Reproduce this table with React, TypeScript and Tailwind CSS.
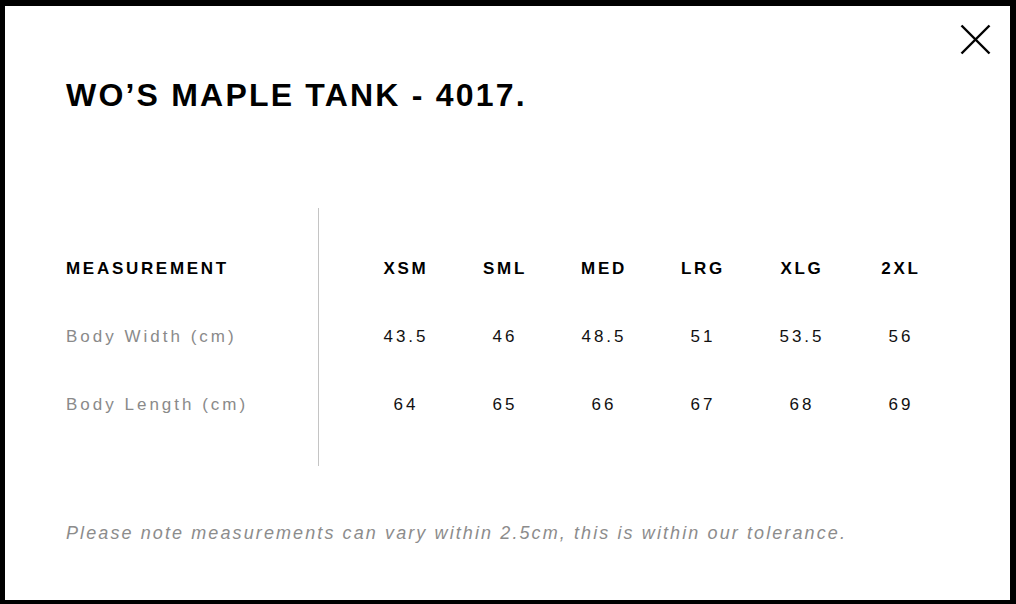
import React from "react";

const sizes = ["XSM", "SML", "MED", "LRG", "XLG", "2XL"];

const rows = [
  { label: "Body Width (cm)", values: ["43.5", "46", "48.5", "51", "53.5", "56"] },
  { label: "Body Length (cm)", values: ["64", "65", "66", "67", "68", "69"] },
];

function CloseIcon() {
  return (
    <svg width="31" height="31" viewBox="0 0 31 31" fill="none" stroke="#000" strokeWidth="2.4">
      <line x1="1.5" y1="1.5" x2="29.5" y2="29.5" />
      <line x1="29.5" y1="1.5" x2="1.5" y2="29.5" />
    </svg>
  );
}

export default function App() {
  return (
    <div
      className="relative w-[1016px] h-[604px] bg-white border-black border-t-[6px] border-l-[5px] border-r-[6px] border-b-[4px] overflow-hidden"
      style={{ fontFamily: '"Liberation Sans", Arial, sans-serif' }}
    >
      <button className="absolute top-[18px] right-[19px]" aria-label="Close">
        <CloseIcon />
      </button>

      <div className="flex flex-col pl-[61px]">
        {/* title */}
        <h2 className="mt-[73px] text-[32px] leading-none font-bold tracking-[2.2px] text-black">
          WO’S MAPLE TANK - 4017.
        </h2>

        {/* size table */}
        <div className="flex mt-[97px]">
          <div className="w-[252px] pt-[27px] flex flex-col">
            <div className="h-[68px] flex items-center text-[17px] font-bold tracking-[2.7px] text-black">
              MEASUREMENT
            </div>
            {rows.map((r) => (
              <div
                key={r.label}
                className="h-[68px] flex items-center text-[17px] tracking-[3px] text-[#8a8a8a]"
              >
                {r.label}
              </div>
            ))}
          </div>

          <div className="border-l border-[#c4c4c4] pl-[36px] py-[27px] flex flex-col">
            <div className="h-[68px] grid grid-cols-[repeat(6,99px)] items-center text-center text-[17px] font-bold tracking-[2.7px] text-black">
              {sizes.map((s) => (
                <span key={s} className="pl-[3px]">
                  {s}
                </span>
              ))}
            </div>
            {rows.map((r) => (
              <div
                key={r.label}
                className="h-[68px] grid grid-cols-[repeat(6,99px)] items-center text-center text-[17px] tracking-[3px] text-[#111]"
              >
                {r.values.map((v, i) => (
                  <span key={i} className="pl-[3px]">
                    {v}
                  </span>
                ))}
              </div>
            ))}
          </div>
        </div>

        {/* footnote */}
        <p className="mt-[55px] text-[18px] leading-[24px] italic tracking-[2.1px] text-[#8c8c8c]">
          Please note measurements can vary within 2.5cm, this is within our tolerance.
        </p>
      </div>
    </div>
  );
}
